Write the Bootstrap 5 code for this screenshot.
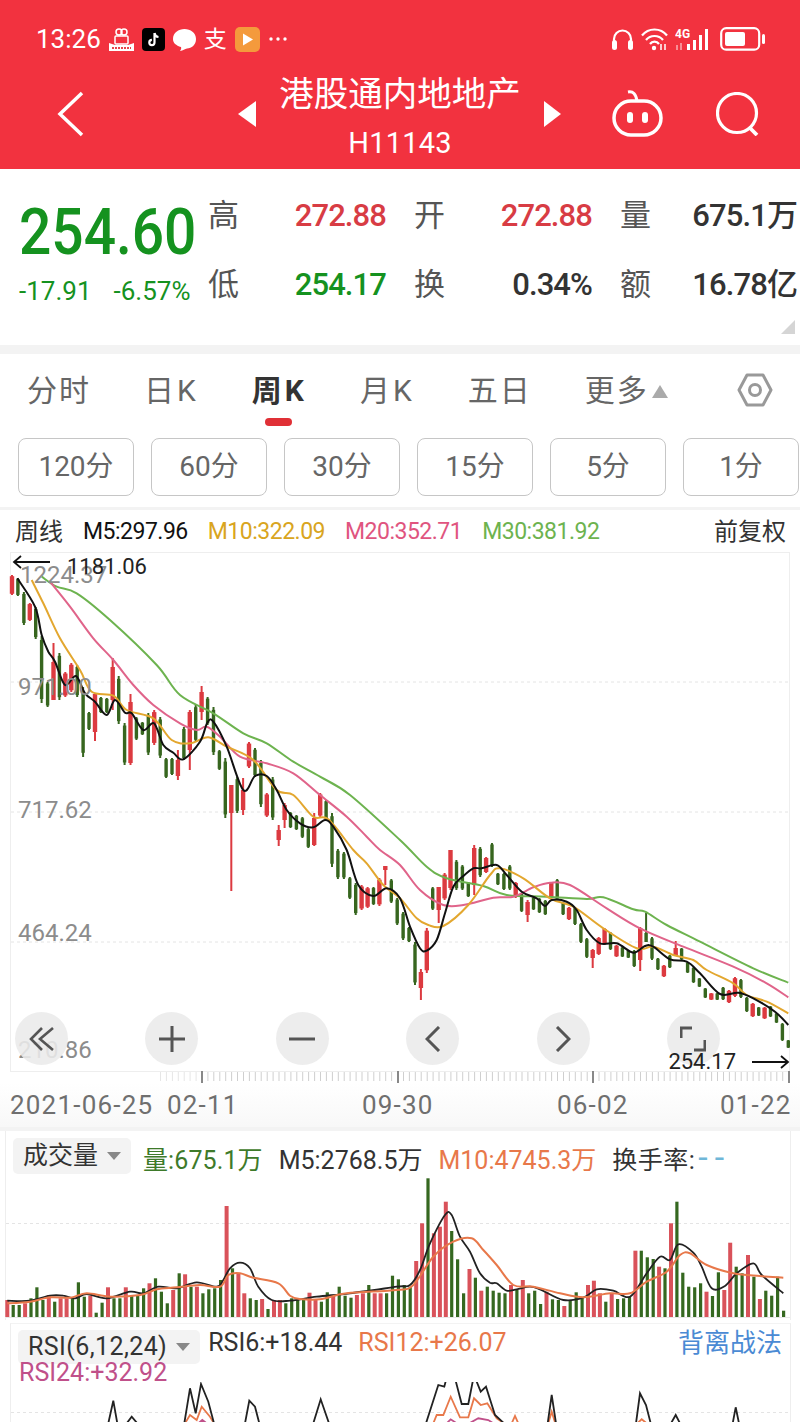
<!DOCTYPE html>
<html lang="zh-CN">
<head>
    <meta charset="UTF-8">
    <meta name="viewport" content="width=device-width, initial-scale=1.0">
    <title>港股通内地地产</title>
    <link rel="stylesheet" href="https://cdn.jsdelivr.net/npm/bootstrap@5.3.0/dist/css/bootstrap.min.css">
    <style>
        body { background: #fff; font-family: Roboto, "Noto Sans CJK SC", sans-serif; color: #333; }
        .app { width: 800px; height: 1422px; overflow: hidden; }
        .topbar { background: #f2323f; height: 169px; color: #fff; }
        .statusline { height: 58px; padding: 20px 35px 0 36px; font-size: 26px; line-height: 24px; }
        .statusline .alipay { font-size: 23px; }
        .statusicons { gap: 7px; }
        .hdnav { height: 111px; }
        .hdback { margin-left: 57px; }
        .hdprev { margin-left: 154px; }
        .hdtitle { width: 288px; text-align: center; }
        .hdtitle .nm { font-size: 34.5px; line-height: 40px; margin-top: 7px; }
        .hdtitle .cd { font-size: 29px; line-height: 36px; margin-top: 11px; letter-spacing: .2px; }
        .hdrobot { margin-left: 51px; }
        .hdsearch { margin-left: 53px; }

        .statbox { height: 176px; }
        .pricecol { width: 208px; padding: 30px 0 0 19px; }
        .bigprice { font-size: 65px; font-weight: 500; line-height: 66px; transform: scaleX(.875); transform-origin: left center; white-space: nowrap; }
        .pricechg { font-size: 26px; line-height: 30px; margin-top: 11px; gap: 22px; white-space: nowrap; }
        .txt-up { color: #d83c44; }
        .txt-dn { color: #15921f; }
        .statgrid { display: grid; grid-template-columns: 178px 178px 177px; column-gap: 28px; grid-auto-rows: 69px; padding-top: 13px; }
        .statcell { font-size: 31px; white-space: nowrap; }
        .statcell b { font-weight: 400; color: #555; }
        .statcell i { font-style: normal; font-weight: 500; letter-spacing: -.9px; }
        .corner { right: 5px; bottom: 11px; }
        .graysep { height: 9px; background: #f3f3f3; }

        .tabline { height: 72px; padding: 0 27px; gap: 53px; font-size: 30px; color: #666; }
        .tabline .nav-link { padding: 0; color: #666; letter-spacing: 2px; white-space: nowrap; }
        .tabline .nav-link.ktab { letter-spacing: 3px; }
        .tabline .nav-link.active { color: #333; font-weight: 700; }
        .tabmark { left: 13px; bottom: -13px; width: 27px; height: 8px; background: #e03036; border-radius: 4px; }
        .morecaret { display: inline-block; width: 0; height: 0; margin-left: 3px; border-left: 8px solid transparent; border-right: 8px solid transparent; border-bottom: 13px solid #aaa; vertical-align: 3px; }
        .chiprow { padding: 12px 0 0 18px; gap: 17px; height: 84px; border-bottom: 3px solid #f3f3f3; }
        .periodbtn { width: 116px; height: 58px; padding: 0; font-size: 28px; color: #666; border: 1px solid #c6c6c6; border-radius: 8px; flex: none; }

        .legendline { height: 42px; padding: 2px 14px 0 15px; font-size: 24px; white-space: nowrap; }
        .legendline .maval { font-size: 23px; letter-spacing: -.5px; }
        .c-m5 { color: #111; }
        .c-m10 { color: #d9a520; }
        .c-m20 { color: #e0557f; }
        .c-m30 { color: #6db34f; }

        .mainchart { height: 531px; }
        .mainchart svg, .subpane svg { display: block; }
        .chartlabel { font-family: Roboto, sans-serif; font-size: 24px; fill: #8c8c8c; }
        .toolbtns { left: 15px; top: 460px; width: 705px; }
        .toolbtn { width: 53px; height: 53px; background: rgba(234,234,234,.88); }
        .lowmark { right: 10px; top: 497px; gap: 16px; font-size: 22px; line-height: 26px; color: #222; }
        .datesrow { height: 44px; padding: 1px 0 0 10px; display: grid; grid-template-columns: 157px 195px 195px 163px auto; font-size: 26px; letter-spacing: 1.2px; color: #6f6f6f; background: linear-gradient(#fff, #f8f8f8); align-items: center; }
        .dategap { height: 4px; background: #f3f3f3; }

        .subpane { border-left: 1px solid #eee; border-right: 1px solid #eee; font-size: 25px; white-space: nowrap; }
        .volpane { margin: 0 9px 0 5px; height: 189px; }
        .volpane svg { margin-left: -6px; }
        .rsipane { margin: 3px 9px 0 10px; border-top: 1px solid #f3f3f3; }
        .rsipane svg { margin-left: -11px; }
        .panehead { height: 45px; padding: 7px 0 0 7px; }
        .rsihead { height: 34px; padding: 6px 8px 0 7px; line-height: 26px; }
        .pickbox { height: 36px; padding: 0 10px; gap: 9px; background: #f3f3f3; border-radius: 5px; color: #333; }
        .rsihead .pickbox { height: 34px; letter-spacing: .4px; }
        .pickcaret { width: 0; height: 0; border-left: 7px solid transparent; border-right: 7px solid transparent; border-top: 8px solid #888; }
        .c-vol { color: #3e7a2a; letter-spacing: .1px; }
        .c-org { color: #e8784a; }
        .c-turn { letter-spacing: .5px; }
        .c-blue { color: #6fb7d8; font-size: 34px; letter-spacing: 7px; line-height: 25px; margin-left: 3px; }
        .c-link { color: #4a8ad4; font-size: 26px; }
        .c-rsi { color: #c0508a; line-height: 18px; padding-left: 8px; margin-top: 6px; height: 18px; }
    </style>
</head>
<body>
<div class="app">

    <!-- red header -->
    <div class="topbar">
        <div class="statusline d-flex align-items-center">
            <span>13:26</span>
            <div class="d-flex align-items-center gap-2 ms-2">
                <svg width="25" height="23" viewBox="0 0 25 23"><circle cx="10" cy="4" r="3" fill="none" stroke="#fff" stroke-width="1.5"/><circle cx="15" cy="4" r="3" fill="none" stroke="#fff" stroke-width="1.5"/><rect x="6" y="8" width="13" height="8" rx="1" fill="none" stroke="#fff" stroke-width="1.5"/><path d="M0 15l6 2h13l6-2v8H0z" fill="#fff"/><path d="M3 20h19" stroke="#e8434b" stroke-width="2" stroke-dasharray="2 1"/></svg>
                <svg width="23" height="23" viewBox="0 0 23 23"><rect width="23" height="23" rx="4" fill="#000"/><path d="M12.5 5v9.5a2.6 2.6 0 1 1-2.6-2.6M12.5 5c.3 2.4 1.8 3.8 4 4" fill="none" stroke="#fff" stroke-width="2.2"/></svg>
                <svg width="23" height="23" viewBox="0 0 23 23"><path d="M11.5 1C17.5 1 23 4.800 23 11s-4.500 9-9 9.500c-2 .3-4 2-7 2.500 1-1.500 1.500-2.500 1-4C3 17.500 0 15 0 11 0 4.800 5.500 1 11.500 1z" fill="#fff"/></svg>
                <span class="alipay lh-1">支</span>
                <svg width="25" height="25" viewBox="0 0 25 25"><rect width="25" height="25" rx="5" fill="#f49a3c"/><path d="M8 6.500l10 6-10 6z" fill="#fff"/></svg>
                <svg width="20" height="4" viewBox="0 0 20 4"><circle cx="3" cy="2" r="1.700" fill="#fff"/><circle cx="10" cy="2" r="1.700" fill="#fff"/><circle cx="17" cy="2" r="1.700" fill="#fff"/></svg>
            </div>
            <div class="statusicons d-flex align-items-center ms-auto">
                <svg width="23" height="22" viewBox="0 0 23 22"><path d="M3 14V11a8.500 8.500 0 0 1 17 0v3" fill="none" stroke="#fff" stroke-width="2.200"/><rect x="1" y="12" width="5" height="10" rx="2.500" fill="#fff"/><rect x="17" y="12" width="5" height="10" rx="2.500" fill="#fff"/></svg>
                <svg width="27" height="23" viewBox="0 0 27 23"><path d="M1 7.500a16 16 0 0 1 25 0M5 12a11 11 0 0 1 17 0M9 16a5.500 5.500 0 0 1 9 0" fill="none" stroke="#fff" stroke-width="2.200"/><circle cx="13" cy="20" r="2.200" fill="#fff"/><path d="M20 16v6M24 16v6" stroke="#fff" stroke-width="1.500"/></svg>
                <svg width="38" height="24" viewBox="0 0 38 24"><path d="M2 18v5M6 16v7" stroke="#fff" stroke-width="1.500" opacity=".6"/><rect x="12" y="17" width="3" height="6" fill="#fff"/><rect x="18" y="13" width="3" height="10" fill="#fff"/><rect x="24" y="8" width="3" height="15" fill="#fff"/><rect x="30" y="2" width="3" height="21" fill="#fff"/><text x="0" y="11" fill="#fff" font-size="12" font-weight="700" font-family="Roboto, sans-serif">4G</text></svg>
                <svg width="45" height="24" viewBox="0 0 45 24"><rect x="1.200" y="1.200" width="38" height="21.500" rx="5" fill="none" stroke="#fff" stroke-width="2.200"/><rect x="5" y="5" width="20" height="14" rx="2" fill="#fff"/><rect x="42" y="7" width="3" height="10" rx="1.500" fill="#fff"/></svg>
            </div>
        </div>
        <div class="hdnav d-flex align-items-center">
            <svg class="hdback" width="27" height="46" viewBox="0 0 27 46"><path d="M25 2L3 23l22 21" fill="none" stroke="#fff" stroke-width="3.500"/></svg>
            <svg class="hdprev" width="18" height="26" viewBox="0 0 18 26"><path d="M18 0v26L0 13z" fill="#fff"/></svg>
            <div class="hdtitle">
                <div class="nm">港股通内地地产</div>
                <div class="cd">H11143</div>
            </div>
            <svg width="17" height="26" viewBox="0 0 17 26"><path d="M0 0v26l17-13z" fill="#fff"/></svg>
            <svg class="hdrobot" width="51" height="47" viewBox="0 0 51 47"><rect x="2" y="11" width="47" height="34" rx="17" fill="none" stroke="#fff" stroke-width="3.500"/><path d="M16 2c5-1 8 2 9 9" fill="none" stroke="#fff" stroke-width="3"/><rect x="15" y="22" width="6" height="11" rx="3" fill="#fff"/><rect x="30" y="22" width="6" height="11" rx="3" fill="#fff"/></svg>
            <svg class="hdsearch" width="44" height="44" viewBox="0 0 44 44"><circle cx="21" cy="21" r="19.500" fill="none" stroke="#fff" stroke-width="3.200"/><path d="M33 35l8 8" stroke="#fff" stroke-width="3.800"/></svg>
        </div>
    </div>

    <!-- quote -->
    <div class="statbox d-flex position-relative">
        <div class="pricecol">
            <div class="bigprice txt-dn">254.60</div>
            <div class="pricechg txt-dn d-flex"><span>-17.91</span><span>-6.57%</span></div>
        </div>
        <div class="statgrid">
            <div class="statcell d-flex justify-content-between align-items-center"><b>高</b><i class="txt-up">272.88</i></div>
            <div class="statcell d-flex justify-content-between align-items-center"><b>开</b><i class="txt-up">272.88</i></div>
            <div class="statcell d-flex justify-content-between align-items-center"><b>量</b><i>675.1万</i></div>
            <div class="statcell d-flex justify-content-between align-items-center"><b>低</b><i class="txt-dn">254.17</i></div>
            <div class="statcell d-flex justify-content-between align-items-center"><b>换</b><i>0.34%</i></div>
            <div class="statcell d-flex justify-content-between align-items-center"><b>额</b><i>16.78亿</i></div>
        </div>
        <svg class="corner position-absolute" width="14" height="14" viewBox="0 0 14 14"><path d="M14 0v14H0z" fill="#d5d5d5"/></svg>
    </div>
    <div class="graysep"></div>

    <!-- period tabs -->
    <nav class="nav tabline align-items-center flex-nowrap">
        <a class="nav-link" href="#">分时</a>
        <a class="nav-link ktab" href="#">日K</a>
        <a class="nav-link ktab active position-relative" href="#">周K<span class="tabmark position-absolute"></span></a>
        <a class="nav-link ktab" href="#">月K</a>
        <a class="nav-link" href="#">五日</a>
        <a class="nav-link" href="#">更多<span class="morecaret"></span></a>
        <svg class="ms-auto" width="36" height="34" viewBox="0 0 36 34"><path d="M10 2h16l8 15-8 15H10L2 17z" fill="none" stroke="#999" stroke-width="3" stroke-linejoin="round"/><circle cx="18" cy="17" r="5.500" fill="none" stroke="#999" stroke-width="3"/></svg>
    </nav>
    <div class="chiprow d-flex">
        <button class="btn periodbtn" type="button">120分</button>
        <button class="btn periodbtn" type="button">60分</button>
        <button class="btn periodbtn" type="button">30分</button>
        <button class="btn periodbtn" type="button">15分</button>
        <button class="btn periodbtn" type="button">5分</button>
        <button class="btn periodbtn" type="button">1分</button>
    </div>

    <!-- MA legend -->
    <div class="legendline d-flex align-items-center">
        <span class="me-3 pe-1">周线</span>
        <span class="maval c-m5">M5:297.96</span>
        <span class="maval c-m10 ms-3 ps-1">M10:322.09</span>
        <span class="maval c-m20 ms-3 ps-1">M20:352.71</span>
        <span class="maval c-m30 ms-3 ps-1">M30:381.92</span>
        <span class="ms-auto">前复权</span>
    </div>

    <!-- K line chart -->
    <div class="mainchart position-relative">
        <svg id="kline" width="800" height="531" viewBox="0 552 800 531"></svg>
        <div class="toolbtns position-absolute d-flex justify-content-between">
            <div class="toolbtn rounded-circle d-flex align-items-center justify-content-center"><svg width="26" height="24" viewBox="0 0 26 24"><path d="M13 1L2 12l11 11M24 1L11 12l13 11" fill="none" stroke="#555" stroke-width="2.600"/></svg></div>
            <div class="toolbtn rounded-circle d-flex align-items-center justify-content-center"><svg width="26" height="26" viewBox="0 0 26 26"><path d="M0 13h26M13 0v26" stroke="#555" stroke-width="3"/></svg></div>
            <div class="toolbtn rounded-circle d-flex align-items-center justify-content-center"><svg width="26" height="4" viewBox="0 0 26 4"><path d="M0 2h26" stroke="#555" stroke-width="3"/></svg></div>
            <div class="toolbtn rounded-circle d-flex align-items-center justify-content-center"><svg width="16" height="26" viewBox="0 0 16 26"><path d="M14 1L2 13l12 12" fill="none" stroke="#555" stroke-width="3"/></svg></div>
            <div class="toolbtn rounded-circle d-flex align-items-center justify-content-center"><svg width="16" height="26" viewBox="0 0 16 26"><path d="M2 1l12 12L2 25" fill="none" stroke="#555" stroke-width="3"/></svg></div>
            <div class="toolbtn rounded-circle d-flex align-items-center justify-content-center"><svg width="26" height="26" viewBox="0 0 26 26"><path d="M1 12V2h11M25 14v10H14" fill="none" stroke="#555" stroke-width="3"/></svg></div>
        </div>
        <div class="lowmark position-absolute d-flex align-items-center">
            <span>254.17</span>
            <svg width="38" height="14" viewBox="0 0 38 14"><path d="M0 7h36M29 1l7 6-7 6" fill="none" stroke="#111" stroke-width="1.800"/></svg>
        </div>
    </div>
    <div class="datesrow">
        <span>2021-06-25</span><span>02-11</span><span>09-30</span><span>06-02</span><span>01-22</span>
    </div>
    <div class="dategap"></div>

    <!-- volume -->
    <div class="subpane volpane">
        <div class="panehead d-flex align-items-start">
            <div class="pickbox d-flex align-items-center">成交量<span class="pickcaret"></span></div>
            <span class="c-vol ms-2 ps-1 mt-1">量:675.1万</span>
            <span class="ms-3 mt-1">M5:2768.5万</span>
            <span class="c-org ms-3 mt-1">M10:4745.3万</span>
            <span class="c-turn ms-3 mt-1">换手率:<span class="c-blue">--</span></span>
        </div>
        <svg id="volchart" width="800" height="144" viewBox="0 1176 800 144"></svg>
    </div>

    <!-- RSI -->
    <div class="subpane rsipane">
        <div class="rsihead d-flex align-items-start">
            <div class="pickbox d-flex align-items-center">RSI(6,12,24)<span class="pickcaret"></span></div>
            <span class="ms-2">RSI6:+18.44</span>
            <span class="c-org ms-3">RSI12:+26.07</span>
            <span class="c-link ms-auto">背离战法</span>
        </div>
        <div class="c-rsi">RSI24:+32.92</div>
        <svg id="rsichart" width="800" height="40" viewBox="0 1382 800 40"></svg>
    </div>
</div>

<script src="https://cdn.jsdelivr.net/npm/bootstrap@5.3.0/dist/js/bootstrap.bundle.min.js"></script>
<script>
    // candles: r/g, high y, low y, optional body top/bottom (page pixels)
    const candles = "r575,595 g578,596 g592,625 r603,621 g607,639 g636,703 g682,707 r643,700,662,700 g653,700 r672,697 r663,692 g665,697 g687,757 g712,730 r693,741,694,732 g697,713 g698,713 r658,710,667,700 g676,724 g723,765 r694,765,702,763 g717,740 g722,735 g713,755 r710,745 g717,758 g758,778 g758,775 r750,780,760,776 g727,760 r710,770,712,750 g705,742 r686,720,692,712 g697,725 g707,755 g750,770 g758,818 r785,891,785,813 g777,813 r778,815,790,810 r742,768 g748,777 g760,807 r793,817 g777,820 r825,846,830,840 r803,828,805,820 g812,828 g815,830 g817,838 g828,848 r813,846,818,845 r793,817 g800,820 g813,867 g849,879 g852,879 g877,899 g883,915 r885,910 r887,908 g887,905 r878,906 r866,885,866,870 g879,903 g898,925 g912,940 g927,942 g942,985 r969,1000,972,988 r928,973 g887,910 r887,923,887,910 r873,900 r850,890,850,888 g860,890 g865,890 g882,897 r845,895,848,885 g847,877 r857,873 g843,867 g873,885 g873,890 g865,890 r882,898 g893,912 r900,922,902,915 g897,910 g898,913 g900,915 r882,898 g879,900 g902,915 r907,920 g907,925 g923,943 g938,958 r949,968,950,958 r937,955 r928,945 g932,950 r945,957 g947,957 g950,958 g950,967 r927,971,928,960 g913,942,933,942 g937,960 g958,970 r965,977 g955,968 r941,956,948,956 g948,960 g962,973 g967,983 g978,987 g988,998 r993,1000 g993,1000 g987,1000 r990,1003 r977,997 g979,998 g997,1012 r1003,1017 g1007,1016 r1007,1019 g1006,1017 g1013,1023 g1023,1041 g1040,1048".split(" ");

    // line points are read off 3x crops: [offset x, offset y, "zx,zy ..."]
    function pts(segs) {
        let out = [];
        segs.forEach(s => s[2].split(" ").forEach(p => {
            let q = p.split(",");
            out.push([s[0] + q[0] / 3, s[1] + q[1] / 3]);
        }));
        return out;
    }
    function smooth(p) {
        let d = "M" + p[0][0].toFixed(1) + " " + p[0][1].toFixed(1);
        for (let i = 0; i < p.length - 1; i++) {
            let a = p[i - 1] || p[i], b = p[i], c = p[i + 1], e = p[i + 2] || c;
            d += "C" + (b[0] + (c[0] - a[0]) / 6).toFixed(1) + " " + (b[1] + (c[1] - a[1]) / 6).toFixed(1) + " " +
                (c[0] - (e[0] - b[0]) / 6).toFixed(1) + " " + (c[1] - (e[1] - b[1]) / 6).toFixed(1) + " " +
                c[0].toFixed(1) + " " + c[1].toFixed(1);
        }
        return d;
    }
    function line(p, color, w) {
        return '<path d="' + smooth(p) + '" fill="none" stroke="' + color + '" stroke-width="' + w + '" stroke-linejoin="round"/>';
    }
    function poly(p, color, w) {
        return '<polyline points="' + p.map(q => q[0].toFixed(1) + "," + q[1].toFixed(1)).join(" ") + '" fill="none" stroke="' + color + '" stroke-width="' + w + '" stroke-linejoin="miter"/>';
    }
    const RED = "#dc3a40", GREEN = "#37661f";

    // main chart
    let k = '<rect x="10.500" y="552.500" width="779" height="519" fill="#fff" stroke="#eee"/>';
    [682, 812, 942].forEach(y => {
        k += '<path d="M11 ' + y + 'H789" stroke="#e4e4e4" stroke-dasharray="3 3"/>';
    });
    candles.forEach((c, i) => {
        let v = c.slice(1).split(",").map(Number), isUp = c[0] == "r", col = isUp ? RED : GREEN, x = 12 + i * 5.926;
        let top = v[2] || v[0] + (v[1] - v[0]) * .06, bot = v[3] || v[1] - (v[1] - v[0]) * .06, w = isUp ? 4.4 : 3.4;
        k += '<rect x="' + (x - 1).toFixed(1) + '" y="' + v[0] + '" width="2" height="' + (v[1] - v[0]) + '" fill="' + col + '"/>';
        k += '<rect x="' + (x - w / 2).toFixed(1) + '" y="' + top + '" width="' + w + '" height="' + (bot - top) + '" fill="' + col + '"/>';
    });
    k += line(pts([[0, 550, "125,80 170,110 230,130 330,210 470,345 540,435 640,490 730,550 800,580 880,635 960,680 1050,735 1200,870"], [400, 800, "80,200 140,235 250,258 320,285 440,290 560,297 610,292 700,328 735,335 800,375 900,425 1060,505 1165,548"]]), "#6db34f", 2);
    k += line(pts([[0, 550, "150,95 210,170 280,265 340,330 400,405 460,465 540,520 590,540 620,530 660,560 720,620 800,640 880,670 960,735 1040,800"], [0, 800, "1100,110 1140,150 1200,195"], [400, 800, "60,270 130,315 190,315 280,293 340,290 400,262 450,248 510,255 620,325 720,385 850,440 1000,500 1100,550 1165,592"]]), "#e0648a", 2);
    k += line(pts([[0, 550, "95,90 130,160 180,265 240,360 275,425 340,437 380,480 460,505 515,570 570,580 625,562 680,590 760,630 830,720 880,735 940,800 985,808 1060,900"], [0, 800, "1100,190 1150,255 1200,295"], [400, 800, "50,355 85,375 130,378 205,315 270,225 300,205 370,235 450,295 520,320 610,385 710,445 760,440 820,465 880,480 920,510 1000,550 1040,585 1100,605 1165,640"]]), "#e3a72f", 2);
    k += line(pts([[0, 550, "52,85 105,170 125,255 145,305 165,335 195,405 228,378 255,430 285,455 320,495 345,450 375,488 395,490 430,540 462,520 490,585 520,608 550,628 600,575 622,518 640,515 680,590 730,720 765,678 800,678 830,720 860,780 900,820 940,832 975,810 1000,830"], [0, 800, "1040,150 1075,255 1120,288 1160,265 1200,295"], [400, 800, "30,380 60,445 80,452 110,420 135,340 160,260 190,228 220,205 245,205 290,195 320,225 365,275 410,295 435,318 455,300 500,305 530,330 560,390 600,430 650,430 700,458 735,438 760,440 810,478 860,485 900,520 960,582 1015,578 1060,595 1125,635 1165,675"]]), "#111", 2);
    [["1224.37", 20, 583], ["971.00", 18, 695], ["717.62", 18, 818], ["464.24", 18, 941], ["210.86", 18, 1058]].forEach(t => {
        k += '<text class="chartlabel" x="' + t[1] + '" y="' + t[2] + '">' + t[0] + '</text>';
    });
    k += '<path d="M50 562H14M21 556l-7 6 7 6" fill="none" stroke="#111" stroke-width="1.800"/>';
    k += '<text x="67" y="574" font-size="22" fill="#222" font-family="Roboto, sans-serif">1181.06</text>';
    for (let x = 160; x < 790; x += 5.926) {
        k += '<rect x="' + x.toFixed(1) + '" y="1072" width="1" height="9" fill="' + (x < 205 ? "#e6e6e6" : "#cfcfcf") + '"/>';
    }
    [201, 397, 592, 788].forEach(x => { k += '<rect x="' + x + '" y="1071" width="2" height="12" fill="#888"/>'; });
    document.getElementById("kline").innerHTML = k;

    // volume bars: r/g + top y in crop px, two crops (x offset 0 and 400)
    const volA = "r510 g525 g525 r520 g505 g472 g510 r495 g515 r505 r505 g505 g457 g500 r497 g548 g518 r472 g505 g505 r472 g495 g495 g475 r460 g445 g485 g520 r480 g430 r433 g470 r470 g490 g478 g475 g450 r228 g415 r430 r490 g505 g510 r507 g537 r510 r510 g520 g505 g510 g505 r488 r510 g515 g487 r497 g470 g497 g503 r495 r490 g465 r490 r490 g490 g437 g448".split(" ");
    const volB = "g465 g470 r393 r280 g145 r310 r290 r215 g303 g388 g490 r417 g443 r482 g470 g482 g488 g490 r465 g480 r450 g490 g482 g522 r485 g508 g510 r528 g510 g487 g505 r465 r452 r490 g515 r490 g507 g505 g500 r362 g362 g382 g387 r410 g415 r280 g215 g428 g470 g472 g460 r485 g498 g427 r480 r338 g410 g430 r375 g440 r507 g482 g497 g440 g542".split(" ");
    let v = '<path d="M6 1223.500H790" stroke="#e4e4e4" stroke-dasharray="3 3"/>';
    function bars(list, start) {
        list.forEach((b, i) => {
            let top = 1130 + b.slice(1) / 3, up = b[0] == "r", w = up ? 4 : 3.2;
            v += '<rect x="' + (start + i * 5.926 - w / 2).toFixed(1) + '" y="' + top.toFixed(1) + '" width="' + w + '" height="' + (1317 - top).toFixed(1) + '" fill="' + (up ? "#d9525a" : "#356820") + '"/>';
        });
    }
    bars(volA, 7.3);
    bars(volB, 404.3);
    v += '<path d="M6 1317.500H790" stroke="#e8e8e8"/>';
    v += line(pts([[0, 1130, "22,512 90,512 150,497 190,497 225,505 260,492 320,505 390,485 430,490 475,470 530,475 590,457 650,470 670,450 690,415 720,398 750,415 775,470 815,510 870,512 950,500 1050,490 1190,470"], [400, 1130, "30,465 60,420 90,340 135,255 155,255 180,320 210,365 240,430 270,458 290,460 320,482 350,478 390,470 420,478 490,510 550,503 590,478 640,482 690,500 740,430 780,380 810,390 835,343 880,368 905,410 935,475 975,468 1010,430 1060,400 1085,435 1150,490"]]), "#222", 1.800);
    v += line(pts([[0, 1130, "22,520 90,515 150,502 210,503 260,490 330,500 420,495 470,478 530,472 600,465 660,470 685,435 720,430 760,443 835,460 870,497 900,507 960,508 1040,490 1190,480"], [400, 1130, "40,465 100,380 160,335 215,325 250,360 290,405 340,465 400,470 480,490 550,502 630,490 690,490 740,455 800,425 840,375 870,370 920,405 1000,430 1080,438 1150,443"]]), "#e8784a", 2);
    document.getElementById("volchart").innerHTML = v;

    // RSI lines, cut off by the bottom of the window
    let r = '<path d="M11 1412.500H790" stroke="#e4e4e4" stroke-dasharray="3 3"/>';
    const rsiBlack = [
        [[0, 1130, "325,880 340,812 352,880"]], [[0, 1130, "380,880 395,860 412,880"]],
        [[0, 1130, "553,880 570,775 587,850 603,762 625,815 642,880"]], [[0, 1130, "735,880 748,812 765,830 778,880"]], [[0, 1130, "940,880 962,808 987,880"]],
        [[400, 1130, "78,880 115,765 133,770 152,695 185,822 205,822 222,735 242,785 258,770 285,855 312,880"]],
        [[400, 1130, "443,880 455,795 468,880"]], [[400, 1130, "708,880 720,790 738,825 752,880"]], [[400, 1130, "813,880 827,855 840,880"]], [[400, 1130, "998,880 1007,832 1017,880"]]
    ];
    const rsiOrange = [
        [[0, 1130, "555,880 570,855 590,870 605,830 630,860 642,880"]],
        [[400, 1130, "100,880 110,855 130,855 152,800 180,862 205,862 222,805 242,825 262,820 290,865 312,880"]],
        [[400, 1130, "335,880 345,858 355,880"]], [[400, 1130, "445,880 455,845 466,880"]], [[400, 1130, "712,880 725,868 740,880"]]
    ];
    const rsiPink = [
        [[0, 1130, "595,880 607,870 620,880"]], [[400, 1130, "140,880 152,868 170,880"]], [[400, 1130, "208,880 235,865 265,870 280,880"]]
    ];
    rsiPink.forEach(s => { r += poly(pts(s), "#c0508a", 1.800); });
    rsiOrange.forEach(s => { r += poly(pts(s), "#e8784a", 1.800); });
    rsiBlack.forEach(s => { r += poly(pts(s), "#222", 1.800); });
    document.getElementById("rsichart").innerHTML = r;
</script>
</body>
</html>
